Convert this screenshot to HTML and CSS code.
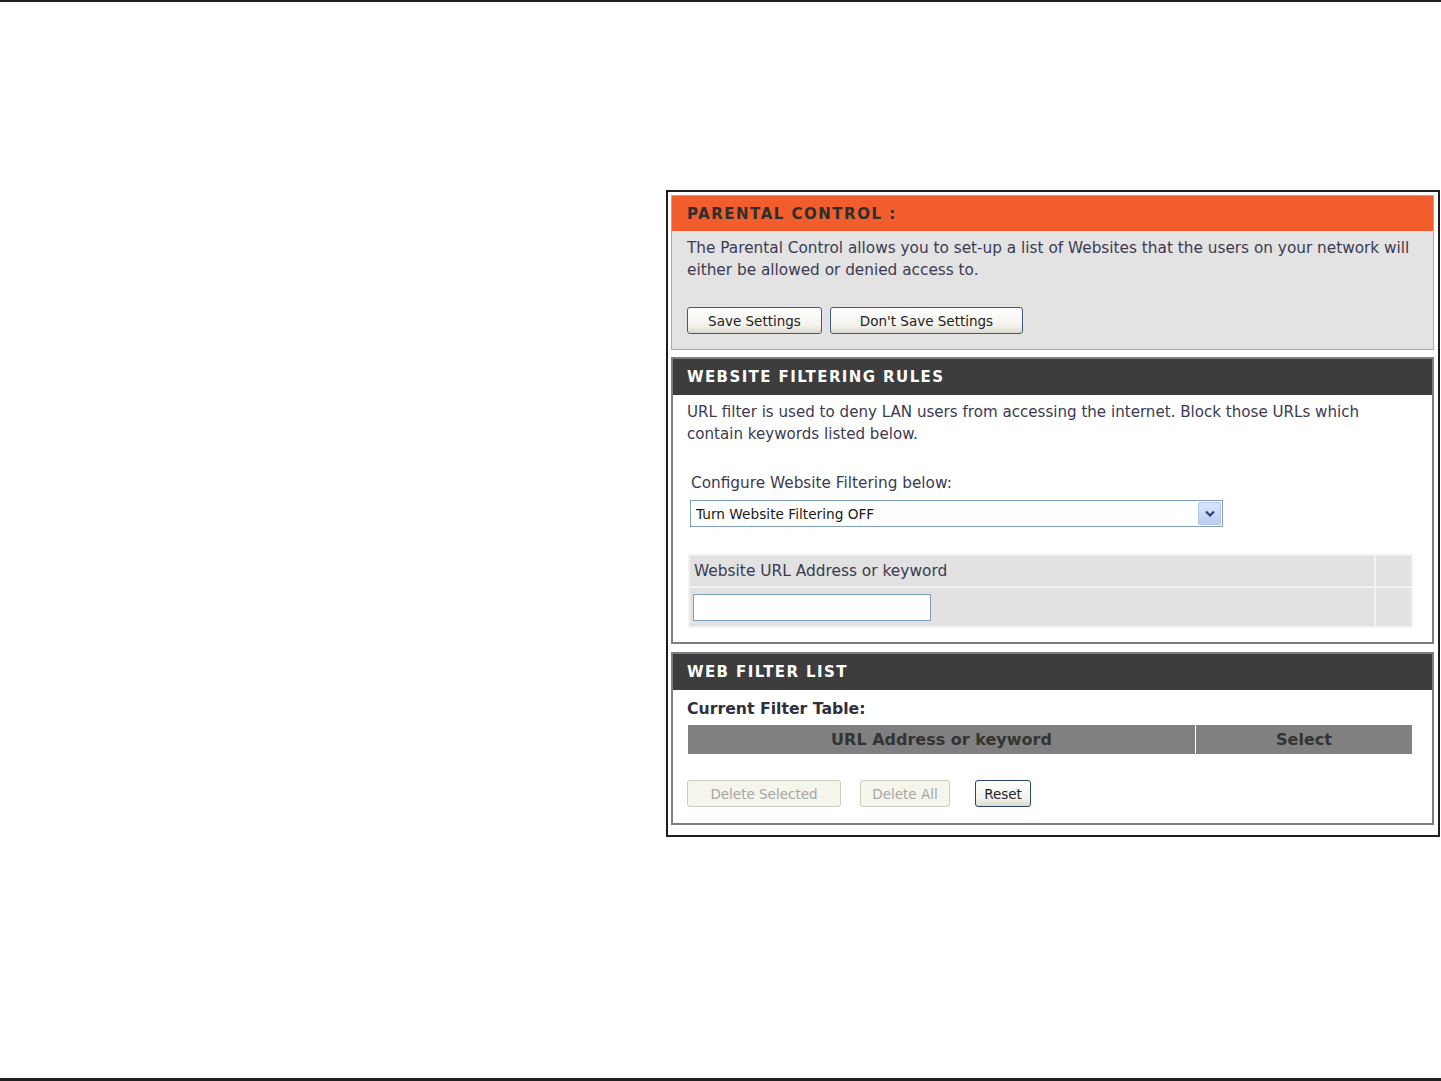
FILE: index.html
```html
<!DOCTYPE html>
<html lang="en">
<head>
    <meta charset="UTF-8">
    <title>Parental Control</title>
    <link rel="stylesheet" href="styles.css">
</head>
<body>
    <div class="rule-top"></div>

    <div class="page">
        <div class="frame">

            <div class="box box-orange">
                <div class="box-head head-orange">PARENTAL CONTROL :</div>
                <div class="box-body body-gray">
                    <p class="txt">The Parental Control allows you to set-up a list of Websites that the users on your network will<br>either be allowed or denied access to.</p>
                    <div class="btn-row">
                        <button class="btn btn-save">Save Settings</button>
                        <button class="btn btn-nosave">Don't Save Settings</button>
                    </div>
                </div>
            </div>

            <div class="box">
                <div class="box-head">WEBSITE FILTERING RULES</div>
                <div class="box-body body-rules">
                    <p class="txt txt-rules">URL filter is used to deny LAN users from accessing the internet. Block those URLs which<br>contain keywords listed below.</p>
                    <p class="txt cfg-label">Configure Website Filtering below:</p>
                    <div class="select">
                        <span class="select-text">Turn Website Filtering OFF</span>
                        <span class="select-arrow">
                            <svg width="12" height="8" viewBox="0 0 12 8"><path d="M2 1.5 L6 5.5 L10 1.5" fill="none" stroke="#2c3f6e" stroke-width="2.2"/></svg>
                        </span>
                    </div>
                    <table class="url-table">
                        <tr class="url-row-head">
                            <td class="url-main">Website URL Address or keyword</td>
                            <td class="url-side"></td>
                        </tr>
                        <tr class="url-row-input">
                            <td class="url-main"><div class="text-input"></div></td>
                            <td class="url-side"></td>
                        </tr>
                    </table>
                </div>
            </div>

            <div class="box box-last">
                <div class="box-head">WEB FILTER LIST</div>
                <div class="box-body body-list">
                    <p class="txt tbl-title">Current Filter Table:</p>
                    <table class="list-table">
                        <tr>
                            <th class="col-url">URL Address or keyword</th>
                            <th class="col-sel">Select</th>
                        </tr>
                    </table>
                    <div class="btn-row list-btns">
                        <button class="btn btn-off btn-delsel" disabled>Delete Selected</button>
                        <button class="btn btn-off btn-delall" disabled>Delete All</button>
                        <button class="btn btn-reset">Reset</button>
                    </div>
                </div>
            </div>

        </div>
    </div>

    <div class="rule-bottom"></div>
</body>
</html>
```

FILE: styles.css
```css
body {
    margin: 0;
    height: 100vh;
    display: flex;
    flex-direction: column;
    background: #fff;
    font-family: "DejaVu Sans", Verdana, sans-serif;
    color: #3a3a4a;
}
.rule-top {
    height: 2px;
    background: #231f20;
}
.rule-bottom {
    height: 3px;
    background: #231f20;
    margin-top: auto;
}
.page {
    padding: 188px 0 0 666px;
}
.frame {
    box-sizing: border-box;
    width: 774px;
    border: 2px solid #1e1e1e;
    padding: 3px 4px 10px 3px;
}
.box {
    border: 2px solid #7e7e7e;
    margin-bottom: 8px;
}
.box-last {
    margin-bottom: 0;
}
.box-orange {
    border: 1px solid #f6906c;
    margin-bottom: 7px;
}
.box-head {
    height: 36px;
    line-height: 37px;
    background: #3d3d3d;
    color: #fff;
    font-weight: bold;
    font-size: 15px;
    letter-spacing: 1.4px;
    padding-left: 14px;
}
.head-orange {
    background: #f15d2c;
    color: #2e2e2e;
    height: 35px;
    line-height: 37px;
    padding-left: 15px;
    letter-spacing: 1.5px;
}
.box-body {
    padding: 6px 14px 0 14px;
    background: #fff;
}
.body-gray {
    background: #e3e3e3;
    padding-left: 15px;
    padding-bottom: 15px;
}
.body-rules {
    padding-bottom: 14px;
}
.txt {
    margin: 0;
    font-size: 15.3px;
    line-height: 22px;
    color: #3b3a50;
}
.txt-rules {
    font-size: 15.1px;
}
.btn-row {
    display: flex;
    gap: 8px;
    margin-top: 26px;
}
.btn {
    font-family: "DejaVu Sans", Verdana, sans-serif;
    font-size: 13.5px;
    color: #222;
    height: 27px;
    padding: 0;
    border: 1px solid #3f5a86;
    border-radius: 3px;
    background: linear-gradient(#ffffff, #f3f2ec 70%, #dcdad0);
}
.btn-save {
    width: 135px;
}
.btn-nosave {
    width: 193px;
}
.cfg-label {
    margin-top: 27px;
    padding-left: 4px;
}
.select {
    display: flex;
    align-items: center;
    justify-content: space-between;
    width: 531px;
    height: 25px;
    margin: 6px 0 0 3px;
    border: 1px solid #7f9db9;
    background: #fff;
}
.select-text {
    font-size: 13.7px;
    padding-left: 5px;
    color: #1a1a1a;
}
.select-arrow {
    display: flex;
    align-items: center;
    justify-content: center;
    width: 21px;
    height: 21px;
    margin-right: 1px;
    border: 1px solid #b4c6ec;
    border-radius: 2px;
    background: linear-gradient(#dce6fb, #b9cdf4);
}
.url-table {
    width: 725px;
    margin: 27px 0 0 1px;
    border-collapse: separate;
    border-spacing: 2px;
    background: #f2f2f2;
}
.url-table td {
    background: #e2e2e2;
    padding: 0;
}
.url-row-head td {
    height: 30px;
}
.url-row-head .url-main {
    font-size: 15.4px;
    padding-left: 4px;
    color: #3b3a50;
}
.url-row-input td {
    height: 38px;
}
.url-side {
    width: 35px;
}
.text-input {
    width: 236px;
    height: 25px;
    margin-left: 3px;
    border: 1px solid #7f9db9;
    background: #fff;
}
.body-list {
    padding-bottom: 16px;
}
.tbl-title {
    font-weight: bold;
    font-size: 15.7px;
    margin-top: 2px;
    color: #2f2f3e;
}
.list-table {
    width: 726px;
    margin: 4px 0 0 0;
    border-collapse: separate;
    border-spacing: 1px;
}
.list-table th {
    height: 29px;
    padding: 0;
    background: #808080;
    color: #333;
    font-size: 16px;
    font-weight: bold;
}
.col-sel {
    width: 216px;
}
.list-btns {
    margin-top: 25px;
    gap: 0;
}
.btn-off {
    border-color: #cdcbbe;
    color: #a6a6a6;
    background: #f6f5ec;
}
.btn-delsel {
    width: 154px;
}
.btn-delall {
    width: 90px;
    margin-left: 19px;
}
.btn-reset {
    width: 56px;
    margin-left: 25px;
    border-color: #2c4470;
    border-width: 1.5px;
}
```
